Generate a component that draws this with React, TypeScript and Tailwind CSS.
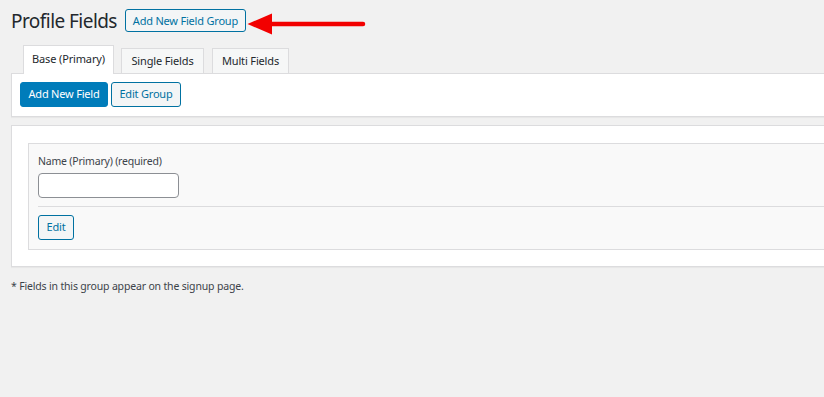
import React from "react";

export default function App() {
  const font = "font-['Noto_Sans','Open_Sans',sans-serif]";
  return (
    <div className={`min-h-screen w-full overflow-hidden bg-[#f1f1f1] pl-[11px] text-[#3c434a] ${font}`}>
      {/* Header */}
      <div className="flex h-[41px] items-center">
        <h1 className="text-[19px] leading-[28px] font-normal tracking-[-0.55px] text-[#23282d]">Profile Fields</h1>
        <button className="ml-[8px] h-[23px] w-[121px] rounded-[3px] border border-[#0071a1] bg-[#f3f5f6] text-[11px] leading-[21px] tracking-[-0.2px] text-[#0071a1]">
          Add New Field Group
        </button>
        <svg width="122" height="24" viewBox="0 0 122 24" className="ml-[1px] mt-[13px] shrink-0 self-start">
          <polygon points="0.5,11 25,0.5 25,21.5" fill="#f20000" />
          <line x1="24" y1="11" x2="116" y2="11" stroke="#f20000" strokeWidth="4.5" strokeLinecap="round" />
        </svg>
      </div>

      {/* Tabs */}
      <div className="relative z-10 mt-[4px] -mb-px flex items-end gap-[7px] pl-[12px]">
        <div className="flex h-[29px] w-[91px] items-center justify-center border-x border-t border-[#dcdcde] bg-white pb-[2px] text-[11px] tracking-[-0.15px] text-[#23282d]">
          Base (Primary)
        </div>
        <div className="flex h-[26px] w-[83px] items-center justify-center border border-[#dcdcde] bg-[#f6f7f7] text-[11px] tracking-[-0.15px] text-[#23282d]">
          Single Fields
        </div>
        <div className="ml-px flex h-[26px] w-[77px] items-center justify-center border border-[#dcdcde] bg-[#f6f7f7] text-[11px] tracking-[-0.15px] text-[#23282d]">
          Multi Fields
        </div>
      </div>

      {/* Panel 1 */}
      <div className="flex gap-[3px] border-y border-l border-[#dcdcde] bg-white pb-[9px] pl-[8px] pt-[8px] shadow-[0_1px_1px_rgba(0,0,0,0.04)]">
        <button className="h-[25px] w-[88px] rounded-[3px] border border-[#007cba] bg-[#007cba] text-[11px] tracking-[-0.2px] text-white">
          Add New Field
        </button>
        <button className="h-[25px] w-[70px] rounded-[3px] border border-[#0071a1] bg-[#f3f5f6] text-[11px] tracking-[-0.2px] text-[#0071a1]">
          Edit Group
        </button>
      </div>

      {/* Panel 2 */}
      <div className="mt-[8px] border-y border-l border-[#dcdcde] bg-white pb-[16px] pl-[16px] pt-[17px] shadow-[0_1px_1px_rgba(0,0,0,0.04)]">
        <div className="border-y border-l border-[#dcdcde] bg-[#f9f9f9] pb-[9px] pl-[9px] pt-[8px]">
          <div className="text-[10.5px] leading-[18px] tracking-[-0.2px] text-[#3c434a]">Name (Primary) (required)</div>
          <input
            type="text"
            className="mt-[3px] block h-[25px] w-[141px] rounded-[4px] border border-[#8c8f94] bg-white outline-none"
          />
          <div className="mt-[8px] h-px bg-[#dcdcde]" />
          <button className="mt-[8px] block h-[25px] w-[36px] rounded-[3px] border border-[#0071a1] bg-[#f3f5f6] text-[11px] tracking-[-0.2px] text-[#0071a1]">
            Edit
          </button>
        </div>
      </div>

      <p className="mt-[11px] text-[10.5px] leading-[16px] tracking-[-0.17px] text-[#3c434a]">
        * Fields in this group appear on the signup page.
      </p>
    </div>
  );
}
